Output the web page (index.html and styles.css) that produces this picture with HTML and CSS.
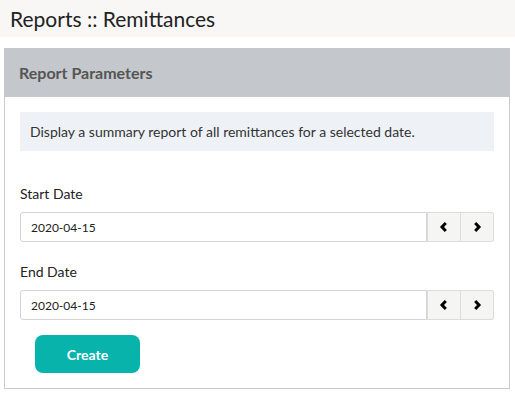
FILE: index.html
```html
<!DOCTYPE html>
<html lang="en">

<head>
    <meta charset="UTF-8">
    <meta name="viewport" content="width=device-width, initial-scale=1.0">
    <title>Reports :: Remittances</title>
    <link rel="stylesheet" href="styles.css">
</head>

<body>
    <div class="page-title">Reports :: Remittances</div>

    <div class="panel">
        <div class="panel-heading">Report Parameters</div>
        <div class="panel-body">
            <div class="info">Display a summary report of all remittances for a selected date.</div>

            <div class="form-group">
                <label for="startDate">Start Date</label>
                <div class="date-group">
                    <input type="text" id="startDate" value="2020-04-15">
                    <button class="nav-btn" type="button">
                        <svg width="12" height="12" viewBox="0 0 12 12"><polyline points="7.8,2 4,6 7.8,10" fill="none" stroke="#000" stroke-width="3"/></svg>
                    </button>
                    <button class="nav-btn" type="button">
                        <svg width="12" height="12" viewBox="0 0 12 12"><polyline points="4.2,2 8,6 4.2,10" fill="none" stroke="#000" stroke-width="3"/></svg>
                    </button>
                </div>
            </div>

            <div class="form-group">
                <label for="endDate">End Date</label>
                <div class="date-group">
                    <input type="text" id="endDate" value="2020-04-15">
                    <button class="nav-btn" type="button">
                        <svg width="12" height="12" viewBox="0 0 12 12"><polyline points="7.8,2 4,6 7.8,10" fill="none" stroke="#000" stroke-width="3"/></svg>
                    </button>
                    <button class="nav-btn" type="button">
                        <svg width="12" height="12" viewBox="0 0 12 12"><polyline points="4.2,2 8,6 4.2,10" fill="none" stroke="#000" stroke-width="3"/></svg>
                    </button>
                </div>
            </div>

            <button class="create-btn" type="button">Create</button>
        </div>
    </div>
</body>

</html>
```

FILE: styles.css
```css
body {
    font-family: 'Lato', 'Liberation Sans', sans-serif;
    background-color: #fff;
    color: #333;
    margin: 0;
}

.page-title {
    background-color: #f8f7f5;
    height: 37px;
    line-height: 37px;
    padding-left: 10px;
    font-size: 21px;
    color: #222;
    margin-bottom: 11px;
}

.panel {
    width: 504px;
    margin-left: 4px;
    border: 1px solid #c8cacd;
    border-top: none;
}

.panel-heading {
    background-color: #c4c7cb;
    height: 49px;
    line-height: 49px;
    padding: 0 15px;
    font-size: 16px;
    font-weight: bold;
    color: #555;
    margin: 0 -1px;
}

.panel-body {
    padding: 15px 15px 15px 15px;
}

.info {
    background-color: #eef2f6;
    height: 39px;
    line-height: 39px;
    padding: 0 10px;
    font-size: 14px;
    color: #333;
    margin-bottom: 33px;
}

.form-group {
    margin-bottom: 20px;
}

label {
    display: block;
    font-size: 14px;
    line-height: 20px;
    color: #222;
    margin-bottom: 8px;
}

.date-group {
    display: flex;
    height: 30px;
}

.date-group input {
    flex: 1;
    min-width: 0;
    height: 30px;
    box-sizing: border-box;
    border: 1px solid #d4d4d4;
    border-radius: 3px 0 0 3px;
    padding: 0 10px;
    font-family: 'Lato', 'Liberation Sans', sans-serif;
    font-size: 12px;
    color: #222;
}

.nav-btn {
    width: 33px;
    height: 30px;
    background-color: #f5f5f4;
    border: 1px solid #dcdcdc;
    border-left: none;
    padding: 0;
    display: flex;
    align-items: center;
    justify-content: center;
    cursor: pointer;
}

.nav-btn:first-of-type {
    border-left: 1px solid #dcdcdc;
    width: 34px;
}

.nav-btn:last-of-type {
    border-radius: 0 3px 3px 0;
}

.form-group:last-of-type {
    margin-bottom: 15px;
}

.create-btn {
    margin-left: 15px;
    width: 105px;
    height: 38px;
    background-color: #07b3ab;
    border: none;
    border-radius: 8px;
    color: #fff;
    font-family: 'Lato', 'Liberation Sans', sans-serif;
    font-size: 14px;
    font-weight: bold;
    cursor: pointer;
    display: block;
}
```
